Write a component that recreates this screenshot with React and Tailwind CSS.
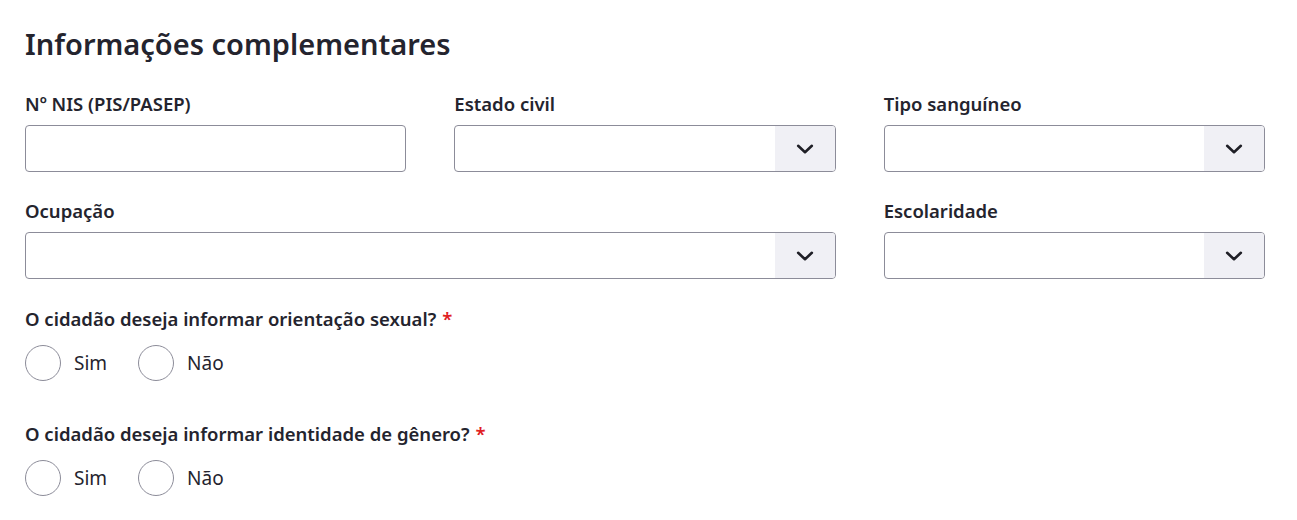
import React from 'react';

const font = { fontFamily: '"Noto Sans", "Open Sans", Arial, sans-serif' };

const Label = ({ children, required, className = 'mb-[9px]' }) => (
  <label className={`block text-[18.5px] font-semibold text-[#24242e] leading-6 ${className}`}>
    {children}
    {required && <span className="text-[#e0201f] ml-1.5">*</span>}
  </label>
);

const Chevron = () => (
  <svg width="22" height="22" viewBox="0 0 24 24" fill="none" stroke="#1f1f26" strokeWidth="2.8" strokeLinecap="round" strokeLinejoin="round">
    <path d="M4.5 8.5l7.5 7 7.5-7" />
  </svg>
);

const TextInput = () => (
  <input
    type="text"
    className="block w-full h-[47px] rounded border border-[#8c8c99] bg-white px-3 outline-none"
  />
);

const Select = () => (
  <div className="flex w-full h-[47px] rounded border border-[#8c8c99] bg-white overflow-hidden">
    <div className="flex-1" />
    <button className="w-[60px] flex items-center justify-center bg-[#f0f0f5]">
      <Chevron />
    </button>
  </div>
);

const Field = ({ label, children, className = '' }) => (
  <div className={className}>
    <Label>{label}</Label>
    {children}
  </div>
);

const Radio = ({ label }) => (
  <label className="flex items-center gap-[13px]">
    <span className="w-9 h-9 rounded-full border border-[#8c8c99] bg-white" />
    <span className="text-[19px] text-[#24242e]">{label}</span>
  </label>
);

const RadioQuestion = ({ question }) => (
  <div>
    <Label required className="mb-[14px]">{question}</Label>
    <div className="flex items-center gap-[31px]">
      <Radio label="Sim" />
      <Radio label="Não" />
    </div>
  </div>
);

export default function App() {
  return (
    <div style={font} className="bg-white w-[1297px] h-[520px] pl-[25px] pr-[32px] pt-[26px]">
      <h2 className="text-[29px] font-semibold text-[#24242e] leading-9 mb-[30px]">
        Informações complementares
      </h2>

      <div className="grid grid-cols-3 gap-x-12 gap-y-[27px]">
        <Field label="Nº NIS (PIS/PASEP)">
          <TextInput />
        </Field>
        <Field label="Estado civil">
          <Select />
        </Field>
        <Field label="Tipo sanguíneo">
          <Select />
        </Field>
        <Field label="Ocupação" className="col-span-2">
          <Select />
        </Field>
        <Field label="Escolaridade">
          <Select />
        </Field>
      </div>

      <div className="mt-[28px] flex flex-col gap-[41px]">
        <RadioQuestion question="O cidadão deseja informar orientação sexual?" />
        <RadioQuestion question="O cidadão deseja informar identidade de gênero?" />
      </div>
    </div>
  );
}
